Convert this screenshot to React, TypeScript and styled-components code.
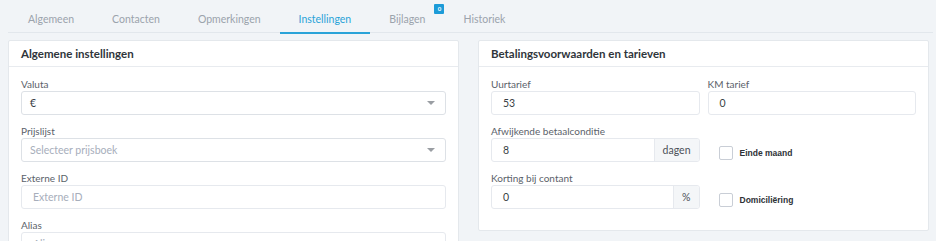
import React from "react";
import styled, { createGlobalStyle } from "styled-components";

const GlobalStyle = createGlobalStyle`
  body {
    margin: 0;
    background: #f1f4f7;
    font-family: Lato, "Open Sans", sans-serif;
    color: #3b4149;
  }
`;

const tabs = ["Algemeen", "Contacten", "Opmerkingen", "Instellingen", "Bijlagen", "Historiek"];

export default function App() {
  return (
    <>
      <GlobalStyle />
      <Page>
        <TabBar>
          {tabs.map((t) => (
            <Tab key={t} $active={t === "Instellingen"}>
              {t}
              {t === "Bijlagen" && <Badge>0</Badge>}
            </Tab>
          ))}
        </TabBar>
        <Columns>
          <Panel>
            <PanelHeader>Algemene instellingen</PanelHeader>
            <PanelBody>
              <Field>
                <Label>Valuta</Label>
                <Select>
                  <span>€</span>
                  <Caret />
                </Select>
              </Field>
              <Field>
                <Label>Prijslijst</Label>
                <Select $placeholder>
                  <span>Selecteer prijsboek</span>
                  <Caret />
                </Select>
              </Field>
              <Field>
                <Label>Externe ID</Label>
                <Input $placeholder>Externe ID</Input>
              </Field>
              <Field>
                <Label>Alias</Label>
                <Input $placeholder>Alias</Input>
              </Field>
            </PanelBody>
          </Panel>
          <Panel>
            <PanelHeader>Betalingsvoorwaarden en tarieven</PanelHeader>
            <PanelBody>
              <Grid>
                <Field>
                  <Label>Uurtarief</Label>
                  <Input>53</Input>
                </Field>
                <Field>
                  <Label>KM tarief</Label>
                  <Input>0</Input>
                </Field>
                <Field>
                  <Label>Afwijkende betaalconditie</Label>
                  <Group>
                    <GroupInput>8</GroupInput>
                    <Addon>dagen</Addon>
                  </Group>
                </Field>
                <CheckCell>
                  <Box />
                  <CheckLabel>Einde maand</CheckLabel>
                </CheckCell>
                <Field>
                  <Label>Korting bij contant</Label>
                  <Group>
                    <GroupInput>0</GroupInput>
                    <Addon>%</Addon>
                  </Group>
                </Field>
                <CheckCell>
                  <Box />
                  <CheckLabel>Domiciliëring</CheckLabel>
                </CheckCell>
              </Grid>
            </PanelBody>
          </Panel>
        </Columns>
      </Page>
    </>
  );
}

const Page = styled.div`
  width: 936px;
  height: 241px;
  overflow: hidden;
  padding: 0 3px 0 8px;
  box-sizing: border-box;
`;

const TabBar = styled.div`
  display: flex;
  height: 33px;
  padding-left: 1px;
  border-bottom: 1px solid #e2e7ec;
  box-sizing: border-box;
`;

const Tab = styled.div<{ $active?: boolean }>`
  position: relative;
  padding: 12px 19px 0;
  font-size: 10.5px;
  line-height: 14px;
  color: ${(p) => (p.$active ? "#2aa3d8" : "#9ba3ac")};
  border-bottom: 2px solid ${(p) => (p.$active ? "#2aa3d8" : "transparent")};
  height: 34px;
  box-sizing: border-box;
`;

const Badge = styled.span`
  position: absolute;
  top: 4px;
  right: 0;
  width: 10px;
  height: 10px;
  border-radius: 1px;
  background: #1c9bd8;
  color: #fff;
  font-size: 6px;
  font-weight: 700;
  line-height: 10px;
  text-align: center;
`;

const Columns = styled.div`
  display: grid;
  grid-template-columns: 451px 451px;
  column-gap: 19px;
  margin-top: 7px;
  align-items: start;
`;

const Panel = styled.div`
  background: #fff;
  border: 1px solid #e4e8ec;
  border-radius: 2px;
`;

const PanelHeader = styled.div`
  height: 25px;
  padding: 0 12px;
  font-size: 11.5px;
  font-weight: 700;
  line-height: 25px;
  color: #2f353b;
  border-bottom: 1px solid #e8ebef;
`;

const PanelBody = styled.div`
  padding: 10px 12px 12px;
`;

const Grid = styled.div`
  display: grid;
  grid-template-columns: 1fr 1fr;
  column-gap: 8px;
`;

const Field = styled.div`
  margin-bottom: 9px;
`;

const Label = styled.div`
  font-size: 10px;
  line-height: 14px;
  color: #5b626a;
`;

const Input = styled.div<{ $placeholder?: boolean }>`
  height: 24px;
  box-sizing: border-box;
  border: 1px solid #e6e9ee;
  border-radius: 3px;
  padding: 0 11px;
  font-size: 10.5px;
  line-height: 22px;
  color: ${(p) => (p.$placeholder ? "#a7aebb" : "#3a3f45")};
`;

const Select = styled(Input)`
  display: flex;
  align-items: center;
  justify-content: space-between;
  padding: 0 10px 0 8px;
  border-color: #dde1e6;
`;

const Caret = styled.span`
  width: 0;
  height: 0;
  border-left: 4px solid transparent;
  border-right: 4px solid transparent;
  border-top: 4px solid #9a9ea3;
`;

const Group = styled.div`
  display: flex;
  height: 24px;
  box-sizing: border-box;
  border: 1px solid #e6e9ee;
  border-radius: 3px;
  overflow: hidden;
`;

const GroupInput = styled.div`
  flex: 1;
  padding: 0 11px;
  font-size: 10.5px;
  line-height: 22px;
  color: #3a3f45;
`;

const Addon = styled.div`
  padding: 0 8px;
  background: #f4f6f8;
  border-left: 1px solid #e6e9ee;
  font-size: 10.5px;
  line-height: 22px;
  color: #4b5057;
`;

const CheckCell = styled.div`
  display: flex;
  align-items: center;
  gap: 7px;
  padding: 23px 0 0 11px;
  height: 12px;
`;

const Box = styled.span`
  width: 12px;
  height: 12px;
  border: 1px solid #c9ced6;
  border-radius: 2px;
  background: #fff;
`;

const CheckLabel = styled.span`
  font-family: "Liberation Sans", Arial, sans-serif;
  font-size: 8.5px;
  font-weight: 600;
  color: #2d3136;
`;
